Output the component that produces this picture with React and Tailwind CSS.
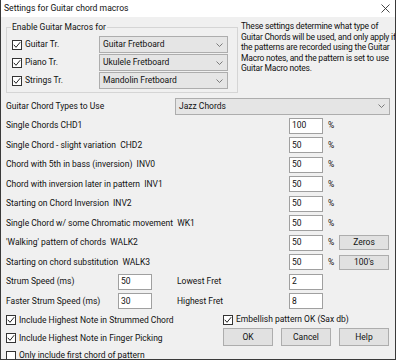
import React from 'react';

function Check({ checked }) {
  return (
    <span className="w-[10px] h-[10px] border border-[#333] bg-white flex items-center justify-center shrink-0">
      {checked && (
        <svg width="8" height="8" viewBox="0 0 8 8">
          <path d="M0.8 3.8 L3 6.3 L7.2 1.2" fill="none" stroke="#222" strokeWidth="1" />
        </svg>
      )}
    </span>
  );
}

function Select({ value, className = '' }) {
  return (
    <div className={`h-[17px] bg-[#e5e5e5] border border-[#adadad] flex items-center justify-between pl-[3px] pr-[4px] ${className}`}>
      <span>{value}</span>
      <svg width="7" height="4" viewBox="0 0 7 4">
        <path d="M0.5 0.5 L3.5 3.5 L6.5 0.5" fill="none" stroke="#606060" strokeWidth="0.8" />
      </svg>
    </div>
  );
}

function Field({ value }) {
  return (
    <div className="w-[34px] h-[16px] bg-white border border-[#a0a0a0] pl-[2px] flex items-center shrink-0">
      {value}
    </div>
  );
}

function Button({ children, className = '' }) {
  return (
    <div className={`w-[50px] bg-[#e1e1e1] border border-[#adadad] flex items-center justify-center ${className}`}>
      {children}
    </div>
  );
}

const percentRows = [
  ['Single Chords CHD1', '100'],
  ['Single Chord - slight variation  CHD2', '50'],
  ['Chord with 5th in bass (inversion)  INV0', '50'],
  ['Chord with inversion later in pattern  INV1', '50'],
  ['Starting on Chord Inversion  INV2', '50'],
  ['Single Chord w/ some Chromatic movement  WK1', '50'],
  ["'Walking' pattern of chords  WALK2", '50', 'Zeros'],
  ['Starting on chord substitution  WALK3', '50', "100's"],
];

const macroRows = [
  ['Guitar Tr.', 'Guitar Fretboard'],
  ['Piano Tr.', 'Ukulele Fretboard'],
  ['Strings Tr.', 'Mandolin Fretboard'],
];

export default function App() {
  return (
    <div className="w-[396px] h-[360px] border-x border-b border-[#3a3a3a] flex flex-col overflow-hidden text-[8.5px] leading-[11px] text-[#111] font-['Roboto','Liberation_Sans',Arial,sans-serif]">
      <div className="h-[17px] bg-white flex items-center justify-between pl-[3px] pr-[5px] shrink-0">
        <span className="text-[8.6px]">Settings for Guitar chord macros</span>
        <svg width="9" height="9" viewBox="0 0 9 9">
          <path d="M0.5 0.5 L8.5 8.5 M8.5 0.5 L0.5 8.5" stroke="#333" strokeWidth="0.9" />
        </svg>
      </div>

      <div className="flex-1 bg-[#f0f0f0] pl-[5px] whitespace-nowrap">
        <div className="h-[79.5px] flex items-start pt-[4px]">
          <fieldset className="w-[232px] h-[72px] border border-[#d5d5d5] pl-[5px] pr-[8px] shrink-0">
            <legend className="px-[1px] -ml-[1px] leading-[12px]">Enable Guitar Macros for</legend>
            <div className="flex flex-col gap-[1px] pt-[3px]">
              {macroRows.map(([label, value]) => (
                <div key={label} className="flex items-center h-[17px]">
                  <Check checked />
                  <span className="ml-[3px] w-[74px]">{label}</span>
                  <Select value={value} className="w-[129px]" />
                </div>
              ))}
            </div>
          </fieldset>
          <p className="ml-[3px] leading-[10.5px] tracking-[-0.2px]">
            These settings determine what type of<br />
            Guitar Chords will be used, and only apply if<br />
            the patterns are recorded using the Guitar<br />
            Macro notes, and the pattern is set to use<br />
            Guitar Macro notes.
          </p>
        </div>

        <div className="h-[19.5px] flex items-center">
          <span className="w-[169px] shrink-0">Guitar Chord Types to Use</span>
          <Select value="Jazz Chords" className="w-[215px] h-[16px]" />
        </div>

        {percentRows.map(([label, value, btn]) => (
          <div key={label} className="h-[19.5px] flex items-center">
            <span className="w-[283px] shrink-0 whitespace-pre">{label}</span>
            <Field value={value} />
            <span className="w-[16px] pl-[5px] shrink-0">%</span>
            {btn && <Button className="h-[15px]">{btn}</Button>}
          </div>
        ))}

        <div className="h-[19.5px] flex items-center">
          <span className="w-[112px] shrink-0">Strum Speed (ms)</span>
          <Field value="50" />
          <span className="w-[112px] ml-[25px] shrink-0">Lowest Fret</span>
          <Field value="2" />
        </div>
        <div className="h-[19.5px] flex items-center">
          <span className="w-[112px] shrink-0">Faster Strum Speed (ms)</span>
          <Field value="30" />
          <span className="w-[112px] ml-[25px] shrink-0">Highest Fret</span>
          <Field value="8" />
        </div>

        <div className="flex">
          <div className="w-[217px] flex flex-col shrink-0">
            <div className="h-[18px] flex items-center">
              <Check checked />
              <span className="ml-[3px]">Include Highest Note in Strummed Chord</span>
            </div>
            <div className="h-[18px] flex items-center">
              <Check checked />
              <span className="ml-[3px]">Include Highest Note in Finger Picking</span>
            </div>
            <div className="h-[17px] flex items-center">
              <Check />
              <span className="ml-[3px]">Only include first chord of pattern</span>
            </div>
          </div>
          <div className="flex flex-col">
            <div className="h-[17px] flex items-center">
              <Check checked />
              <span className="ml-[3px]">Embellish pattern OK (Sax db)</span>
            </div>
            <div className="flex gap-[8px]">
              <Button className="h-[18px]">OK</Button>
              <Button className="h-[18px]">Cancel</Button>
              <Button className="h-[18px]">Help</Button>
            </div>
          </div>
        </div>
      </div>
    </div>
  );
}
